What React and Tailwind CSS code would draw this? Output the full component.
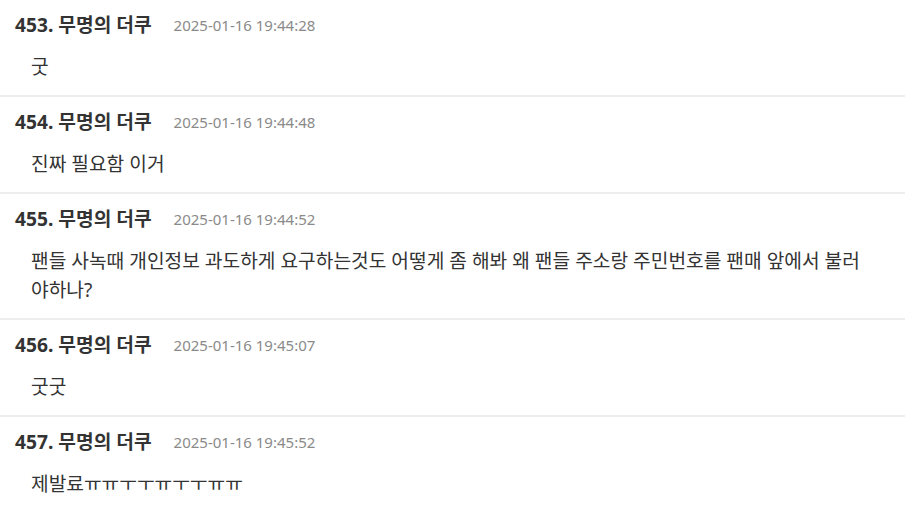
import React from 'react';

const comments = [
  { no: 453, name: '무명의 더쿠', date: '2025-01-16 19:44:28', text: '굿' },
  { no: 454, name: '무명의 더쿠', date: '2025-01-16 19:44:48', text: '진짜 필요함 이거' },
  {
    no: 455,
    name: '무명의 더쿠',
    date: '2025-01-16 19:44:52',
    text: '팬들 사녹때 개인정보 과도하게 요구하는것도 어떻게 좀 해봐 왜 팬들 주소랑 주민번호를 팬매 앞에서 불러야하나?',
  },
  { no: 456, name: '무명의 더쿠', date: '2025-01-16 19:45:07', text: '굿굿' },
  { no: 457, name: '무명의 더쿠', date: '2025-01-16 19:45:52', text: '제발료ㅠㅠㅜㅜㅠㅜㅜㅠㅠ' },
];

const Comment = ({ c }) => (
  <li className="px-[15px] pt-[11px] pb-[14px] border-b-2 border-[#eeeeee]">
    <div className="flex items-center h-7">
      <span className="text-[19.2px] font-bold text-[#333333]">
        {c.no}. {c.name}
      </span>
      <span className="ml-[22px] text-[15px] text-[#8a8a8a]">{c.date}</span>
    </div>
    <p className="mt-[13px] pl-4 pr-[28px] text-[19.2px] leading-[29px] text-[#333333] break-all">{c.text}</p>
  </li>
);

export default function App() {
  return (
    <div
      className="w-[905px] h-[511px] overflow-hidden bg-white"
      style={{ fontFamily: '"Noto Sans", "Noto Sans CJK KR", sans-serif' }}
    >
      <ul>
        {comments.map((c) => (
          <Comment key={c.no} c={c} />
        ))}
      </ul>
    </div>
  );
}
